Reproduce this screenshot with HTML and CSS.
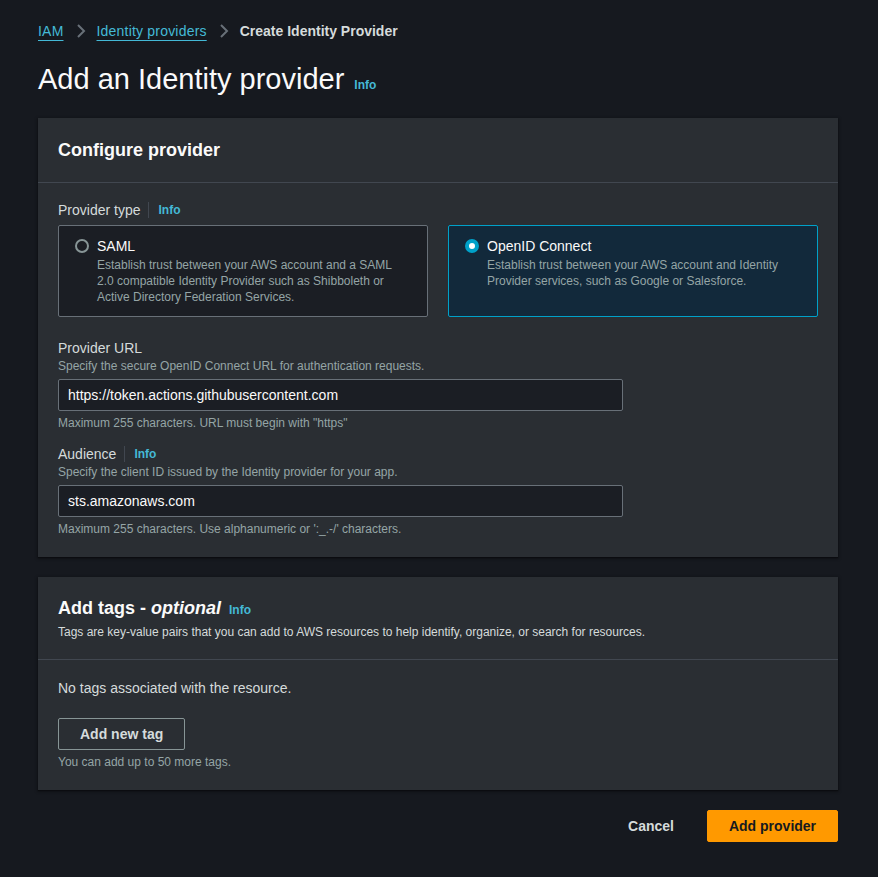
FILE: index.html
```html
<!DOCTYPE html>
<html lang="en">
<head>
<meta charset="utf-8">
<title>Add an Identity provider</title>
<link rel="stylesheet" href="styles.css">
</head>
<body>
<div class="page">
  <nav class="breadcrumbs">
    <a class="crumb-link" href="#">IAM</a>
    <svg class="chev" viewBox="0 0 10 14" width="10" height="14"><path d="M2 1l6 6-6 6" fill="none" stroke="currentColor" stroke-width="2"/></svg>
    <a class="crumb-link" href="#">Identity providers</a>
    <svg class="chev" viewBox="0 0 10 14" width="10" height="14"><path d="M2 1l6 6-6 6" fill="none" stroke="currentColor" stroke-width="2"/></svg>
    <span class="crumb-current">Create Identity Provider</span>
  </nav>

  <header class="page-header">
    <h1 class="page-title">Add an Identity provider</h1>
    <a class="info-link info-title" href="#">Info</a>
  </header>

  <section class="card">
    <div class="card-header">
      <h2 class="card-title">Configure provider</h2>
    </div>
    <div class="card-body">
      <div class="field-label">
        <span>Provider type</span>
        <span class="label-sep"></span>
        <a class="info-link" href="#">Info</a>
      </div>
      <div class="tiles">
        <label class="tile">
          <span class="radio"></span>
          <span class="tile-text">
            <span class="tile-title">SAML</span>
            <span class="tile-desc">Establish trust between your AWS account and a SAML 2.0 compatible Identity Provider such as Shibboleth or Active Directory Federation Services.</span>
          </span>
        </label>
        <label class="tile tile-selected">
          <span class="radio radio-checked"></span>
          <span class="tile-text">
            <span class="tile-title">OpenID Connect</span>
            <span class="tile-desc">Establish trust between your AWS account and Identity Provider services, such as Google or Salesforce.</span>
          </span>
        </label>
      </div>

      <div class="field field-url">
        <div class="field-label"><span>Provider URL</span></div>
        <div class="field-desc">Specify the secure OpenID Connect URL for authentication requests.</div>
        <div class="input">https://token.actions.githubusercontent.com</div>
        <div class="field-hint">Maximum 255 characters. URL must begin with "https"</div>
      </div>

      <div class="field field-aud">
        <div class="field-label">
          <span>Audience</span>
          <span class="label-sep"></span>
          <a class="info-link" href="#">Info</a>
        </div>
        <div class="field-desc">Specify the client ID issued by the Identity provider for your app.</div>
        <div class="input">sts.amazonaws.com</div>
        <div class="field-hint">Maximum 255 characters. Use alphanumeric or ':_.-/' characters.</div>
      </div>
    </div>
  </section>

  <section class="card">
    <div class="card-header card-header-tags">
      <div class="tags-title-row">
        <h2 class="card-title">Add tags - <em>optional</em></h2>
        <a class="info-link" href="#">Info</a>
      </div>
      <div class="card-desc">Tags are key-value pairs that you can add to AWS resources to help identify, organize, or search for resources.</div>
    </div>
    <div class="card-body card-body-tags">
      <p class="empty-text">No tags associated with the resource.</p>
      <button class="btn-normal" type="button">Add new tag</button>
      <div class="field-hint">You can add up to 50 more tags.</div>
    </div>
  </section>

  <footer class="actions">
    <button class="btn-link" type="button">Cancel</button>
    <button class="btn-primary" type="button">Add provider</button>
  </footer>
</div>
</body>
</html>
```

FILE: styles.css
```css
* { box-sizing: border-box; }

html, body {
  margin: 0;
  padding: 0;
  background: #16191f;
}

body {
  font-family: "Liberation Sans", Arial, sans-serif;
  color: #d5dbdb;
  font-size: 14px;
  line-height: 20px;
}

.page {
  padding: 21px 40px 30px 38px;
}

a { text-decoration: none; }

.breadcrumbs {
  display: flex;
  align-items: center;
  height: 20px;
  font-size: 14px;
}

.crumb-link {
  color: #44b9d6;
  text-decoration: underline;
  text-underline-offset: 4px;
  letter-spacing: 0.2px;
}

.chev {
  color: #687078;
  width: 10px;
  height: 14px;
  margin: 0 11px 0 12px;
}

.crumb-current {
  color: #d5dbdb;
  font-weight: bold;
}

.page-header {
  display: flex;
  align-items: baseline;
  margin-top: 18px;
  height: 44px;
}

.page-title {
  margin: 0;
  font-size: 29px;
  line-height: 40px;
  font-weight: normal;
  color: #fafafa;
}

.info-link {
  color: #44b9d6;
  font-weight: bold;
  font-size: 12px;
}

.info-title {
  margin-left: 10px;
}

.card {
  background: #2a2e33;
  box-shadow: 0 1px 1px 0 rgba(0, 0, 0, 0.3), 0 1px 3px 1px rgba(0, 0, 0, 0.3);
  margin-top: 15px;
}

.card + .card {
  margin-top: 20px;
}

.card-header {
  padding: 20px 20px 20px;
  border-bottom: 1px solid #414750;
}

.card-title {
  margin: 0;
  font-size: 18px;
  line-height: 24px;
  font-weight: bold;
  color: #fafafa;
}

.card-title em {
  font-style: italic;
}

.card-body {
  padding: 17px 20px 20px;
}

.field-label {
  display: flex;
  align-items: center;
  color: #d5dbdb;
  font-size: 14px;
  line-height: 20px;
}

.label-sep {
  display: inline-block;
  width: 1px;
  height: 16px;
  background: #414750;
  margin: 0 9px 0 8px;
}

.tiles {
  display: grid;
  grid-template-columns: 1fr 1fr;
  gap: 20px;
  margin-top: 5px;
}

.tile {
  display: flex;
  align-items: flex-start;
  gap: 8px;
  padding: 10px 16px 11px;
  border: 1px solid #687078;
  border-radius: 2px;
  background: #1b1e24;
}

.tile-selected {
  background: #12293b;
  border-color: #00a1c9;
}

.radio {
  flex: none;
  width: 14px;
  height: 14px;
  margin-top: 3px;
  border: 2px solid #879596;
  border-radius: 50%;
}

.radio-checked {
  border: 4px solid #00a1c9;
  background: #ffffff;
}

.tile-text {
  display: flex;
  flex-direction: column;
}

.tile-title {
  color: #fafafa;
  font-size: 14px;
  line-height: 20px;
  margin-bottom: 1px;
}

.tile-desc {
  color: #95a5a6;
  font-size: 12px;
  line-height: 16px;
}

.field-url {
  margin-top: 21px;
}

.field-aud {
  margin-top: 13px;
}

.field-desc {
  color: #95a5a6;
  font-size: 12px;
  line-height: 16px;
}

.input {
  width: 565px;
  height: 32px;
  margin-top: 5px;
  padding: 0 9px;
  border: 1px solid #687078;
  border-radius: 2px;
  background: #1b1e24;
  color: #fafafa;
  font-size: 14px;
  line-height: 30px;
}

.field-hint {
  margin-top: 4px;
  color: #95a5a6;
  font-size: 12px;
  line-height: 16px;
}

.card-header-tags {
  padding: 20px 20px 19px;
}

.tags-title-row {
  display: flex;
  align-items: baseline;
  gap: 8px;
}

.tags-title-row .card-title {
  line-height: 22px;
}

.card-desc {
  margin-top: 4px;
  color: #d5dbdb;
  font-size: 12px;
  line-height: 16px;
}

.card-body-tags {
  padding: 18px 20px 20px;
}

.empty-text {
  margin: 0;
  color: #d5dbdb;
  font-size: 14px;
  line-height: 20px;
}

.btn-normal {
  display: block;
  margin-top: 20px;
  height: 32px;
  padding: 0 21px;
  background: transparent;
  border: 1px solid #879596;
  border-radius: 2px;
  color: #d5dbdb;
  font-family: inherit;
  font-size: 14px;
  font-weight: bold;
}

.card-body-tags .field-hint {
  margin-top: 4px;
}

.actions {
  display: flex;
  justify-content: flex-end;
  align-items: center;
  gap: 13px;
  margin-top: 20px;
}

.btn-link {
  height: 32px;
  padding: 0 20px;
  background: transparent;
  border: none;
  color: #d5dbdb;
  font-family: inherit;
  font-size: 14px;
  font-weight: bold;
}

.btn-primary {
  height: 32px;
  width: 131px;
  padding: 0 20px;
  background: #ff9900;
  border: 1px solid #ff9900;
  border-radius: 2px;
  color: #16191f;
  font-family: inherit;
  font-size: 14px;
  font-weight: bold;
}
```
